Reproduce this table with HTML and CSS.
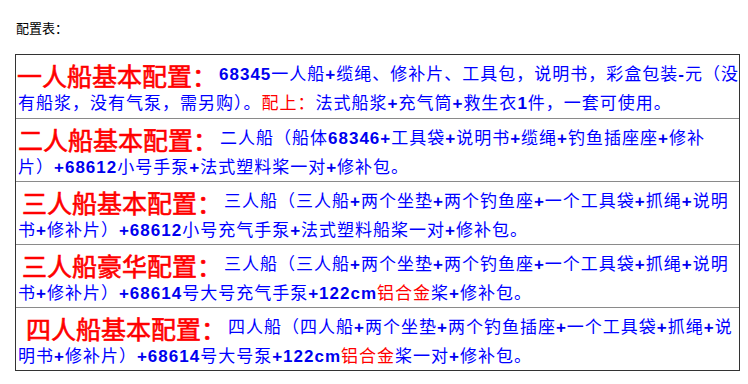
FILE: index.html
```html
<!DOCTYPE html>
<html lang="zh-CN">
<head>
<meta charset="utf-8">
<title>配置表</title>
<link rel="stylesheet" href="styles.css">
</head>
<body>
<div class="page">
  <p class="title">配置表：</p>
  <div class="table">
    <div class="row">
      <div class="l1"><span class="h">一人船基本配置：</span><span class="t"><b>68345</b>一人船<b>+</b>缆绳、修补片、工具包，说明书，彩盒包装<b>-</b>元（没</span></div>
      <div class="l2 t">有船浆，没有气泵，需另购）。<span class="red">配上：</span>法式船浆<b>+</b>充气筒<b>+</b>救生衣<b>1</b>件，一套可使用。</div>
    </div>
    <div class="row">
      <div class="l1"><span class="h h-in0">二人船基本配置：</span><span class="t">二人船（船体<b>68346+</b>工具袋<b>+</b>说明书<b>+</b>缆绳<b>+</b>钓鱼插座座<b>+</b>修补</span></div>
      <div class="l2 t">片）<b>+68612</b>小号手泵<b>+</b>法式塑料桨一对<b>+</b>修补包。</div>
    </div>
    <div class="row">
      <div class="l1"><span class="h h-in1">三人船基本配置：</span><span class="t">三人船（三人船<b>+</b>两个坐垫<b>+</b>两个钓鱼座<b>+</b>一个工具袋<b>+</b>抓绳<b>+</b>说明</span></div>
      <div class="l2 t">书<b>+</b>修补片）<b>+68612</b>小号充气手泵<b>+</b>法式塑料船桨一对<b>+</b>修补包。</div>
    </div>
    <div class="row">
      <div class="l1"><span class="h h-in1">三人船豪华配置：</span><span class="t">三人船（三人船<b>+</b>两个坐垫<b>+</b>两个钓鱼座<b>+</b>一个工具袋<b>+</b>抓绳<b>+</b>说明</span></div>
      <div class="l2 t">书<b>+</b>修补片）<b>+68614</b>号大号充气手泵<b>+122cm</b><span class="red">铝合金</span>桨<b>+</b>修补包。</div>
    </div>
    <div class="row">
      <div class="l1"><span class="h h-in2">四人船基本配置：</span><span class="t">四人船（四人船<b>+</b>两个坐垫<b>+</b>两个钓鱼插座<b>+</b>一个工具袋<b>+</b>抓绳<b>+</b>说</span></div>
      <div class="l2 t">明书<b>+</b>修补片）<b>+68614</b>号大号泵<b>+122cm</b><span class="red">铝合金</span>桨一对<b>+</b>修补包。</div>
    </div>
  </div>
</div>
</body>
</html>
```

FILE: styles.css
```css
html, body {
  margin: 0;
  padding: 0;
  background: #ffffff;
}

.page {
  padding: 18px 0 0 15px;
  font-family: "Liberation Sans", "Noto Sans CJK SC", sans-serif;
}

.title {
  margin: 0 0 16px 1px;
  font-family: "Noto Sans CJK SC", sans-serif;
  font-size: 13px;
  line-height: 20px;
  color: #000;
}

.table {
  width: 723px;
  border: 1px solid #333;
}

.row {
  height: 63px;
  box-sizing: border-box;
  padding: 5px 0 0 1px;
  white-space: nowrap;
  overflow: hidden;
}

.row + .row {
  border-top: 1px solid #8a8a8a;
}

.l1 {
  line-height: 30px;
  height: 30px;
}

.l2 {
  line-height: 28px;
  height: 28px;
  padding-left: 1px;
}

.h {
  font-family: "Noto Sans CJK SC", sans-serif;
  font-size: 25px;
  font-weight: 400;
  -webkit-text-stroke: 0.6px #ff0000;
  color: #ff0000;
  margin-right: 2px;
  vertical-align: top;
}

.h-in0 { margin-left: 1px; }
.h-in1 { margin-left: 5px; }
.h-in2 { margin-left: 9px; }

.t {
  font-family: "Liberation Sans", "Noto Sans CJK SC", sans-serif;
  font-size: 17px;
  letter-spacing: 1px;
  color: #0000ff;
}

.t b {
  font-weight: 700;
  color: #0000ee;
}

.red {
  color: #ff0000;
}
```
